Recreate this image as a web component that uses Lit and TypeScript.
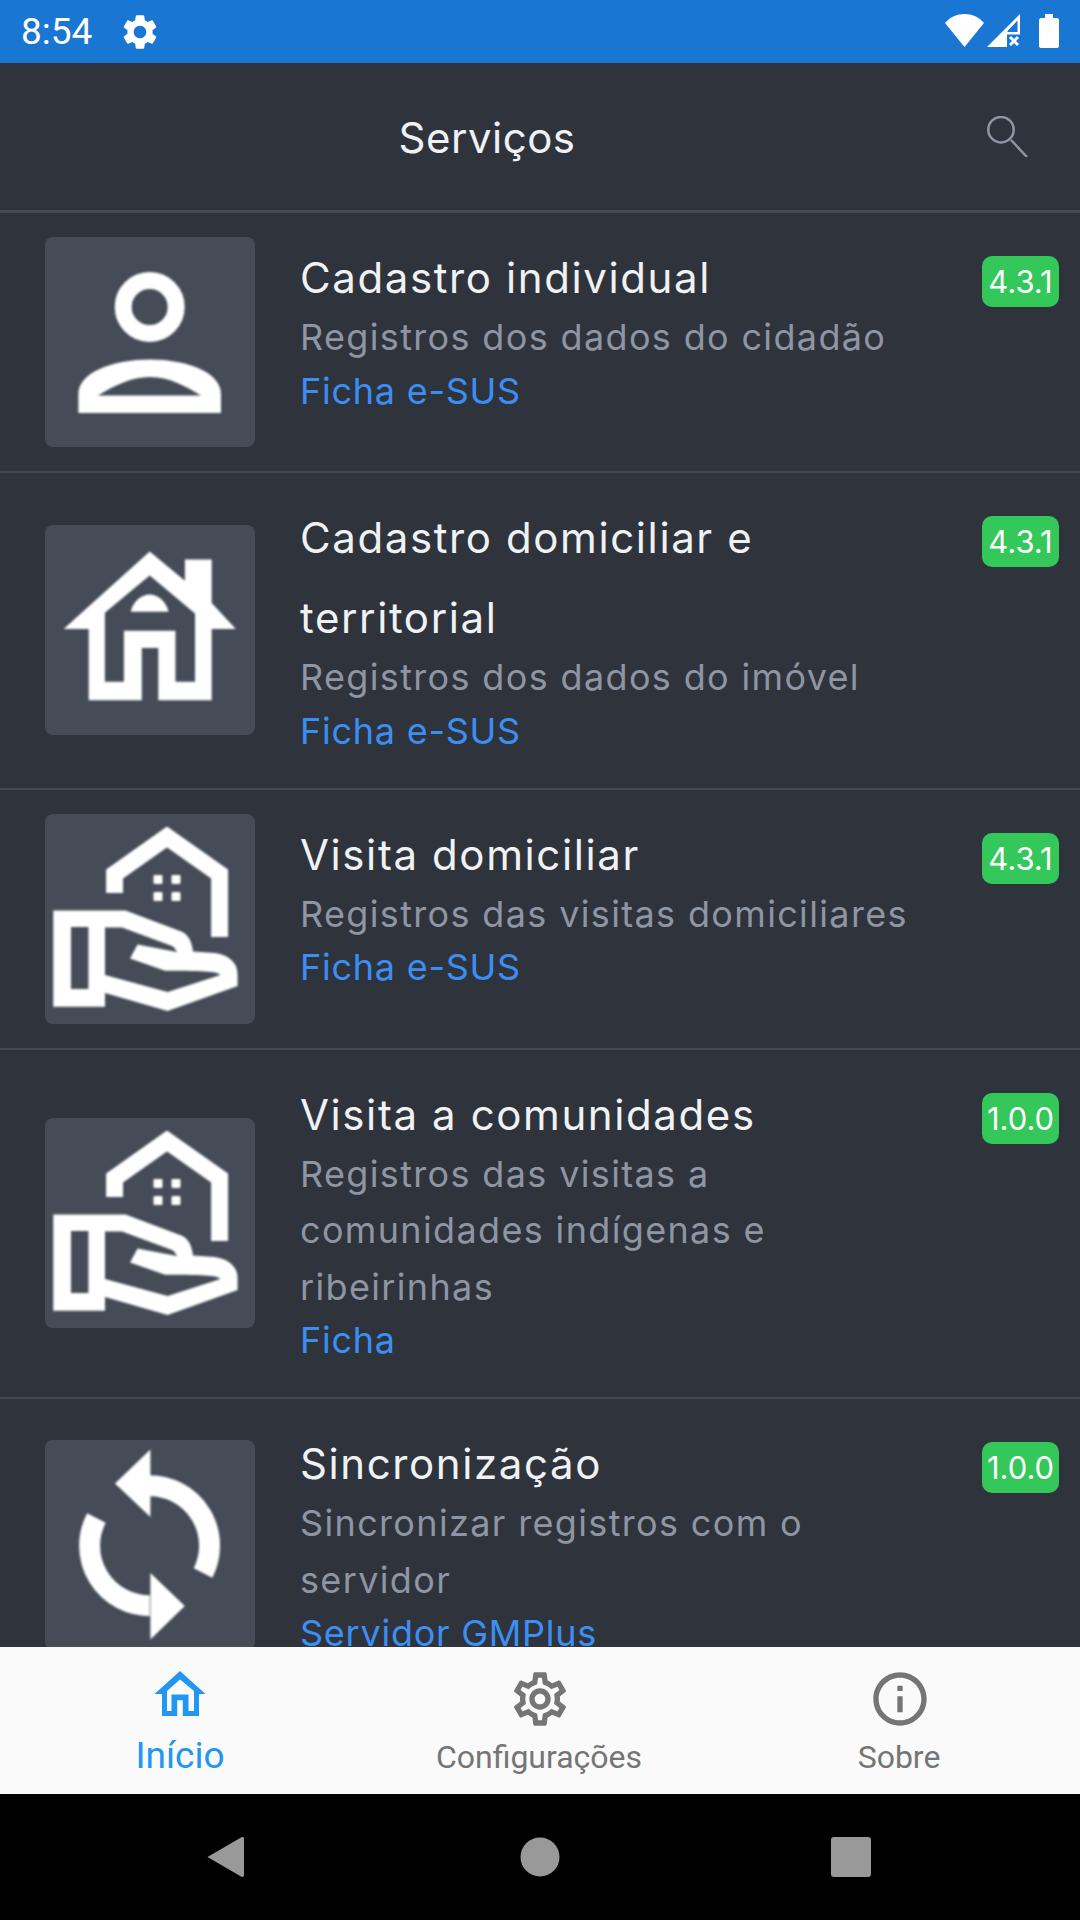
import { LitElement, html, css, svg } from "lit";
import { customElement } from "lit/decorators.js";

const GEAR_FILL = "M19.14 12.94c.04-.3.06-.61.06-.94 0-.32-.02-.64-.07-.94l2.03-1.58c.18-.14.23-.41.12-.61l-1.92-3.32c-.12-.22-.37-.29-.59-.22l-2.39.96c-.5-.38-1.03-.7-1.62-.94l-.36-2.54c-.04-.24-.24-.41-.48-.41h-3.84c-.24 0-.43.17-.47.41l-.36 2.54c-.59.24-1.13.57-1.62.94l-2.39-.96c-.22-.08-.47 0-.59.22L2.74 8.87c-.12.21-.08.47.12.61l2.03 1.58c-.05.3-.09.63-.09.94s.02.64.07.94l-2.03 1.58c-.18.14-.23.41-.12.61l1.92 3.32c.12.22.37.29.59.22l2.39-.96c.5.38 1.03.7 1.62.94l.36 2.54c.05.24.24.41.48.41h3.84c.24 0 .44-.17.47-.41l.36-2.54c.59-.24 1.13-.56 1.62-.94l2.39.96c.22.08.47 0 .59-.22l1.92-3.32c.12-.22.07-.47-.12-.61l-2.01-1.58zM12 15.6c-1.98 0-3.6-1.62-3.6-3.6s1.62-3.6 3.6-3.6 3.6 1.62 3.6 3.6-1.62 3.6-3.6 3.6z";
const GEAR_OUT = "M19.43 12.98c.04-.32.07-.64.07-.98 0-.34-.03-.66-.07-.98l2.11-1.65c.19-.15.24-.42.12-.64l-2-3.46c-.09-.16-.26-.25-.44-.25-.06 0-.12.01-.17.03l-2.49 1c-.52-.4-1.08-.73-1.69-.98l-.38-2.65C14.46 2.18 14.25 2 14 2h-4c-.25 0-.46.18-.49.42l-.38 2.65c-.61.25-1.17.59-1.69.98l-2.49-1c-.06-.02-.12-.03-.18-.03-.17 0-.34.09-.43.25l-2 3.46c-.13.22-.07.49.12.64l2.11 1.65c-.04.32-.07.65-.07.98 0 .33.03.66.07.98l-2.11 1.65c-.19.15-.24.42-.12.64l2 3.46c.09.16.26.25.44.25.06 0 .12-.01.17-.03l2.49-1c.52.4 1.08.73 1.69.98l.38 2.65c.03.24.24.42.49.42h4c.25 0 .46-.18.49-.42l.38-2.65c.61-.25 1.17-.59 1.69-.98l2.49 1c.06.02.12.03.18.03.17 0 .34-.09.43-.25l2-3.46c.12-.22.07-.49-.12-.64l-2.11-1.65zm-1.98-1.71c.04.31.05.52.05.73 0 .21-.02.43-.05.73l-.14 1.13.89.7 1.08.84-.7 1.21-1.27-.51-1.04-.42-.9.68c-.43.32-.84.56-1.25.73l-1.06.43-.16 1.13-.2 1.35h-1.4l-.19-1.35-.16-1.13-1.06-.43c-.43-.18-.83-.41-1.23-.71l-.91-.7-1.06.43-1.27.51-.7-1.21 1.08-.84.89-.7-.14-1.13c-.03-.31-.05-.54-.05-.74s.02-.43.05-.73l.14-1.13-.89-.7-1.08-.84.7-1.21 1.27.51 1.04.42.9-.68c.43-.32.84-.56 1.25-.73l1.06-.43.16-1.13.2-1.35h1.39l.19 1.35.16 1.13 1.06.43c.43.18.83.41 1.23.71l.91.7 1.06-.43 1.27-.51.7 1.21-1.07.85-.89.7.14 1.13zM12 8c-2.21 0-4 1.79-4 4s1.79 4 4 4 4-1.79 4-4-1.79-4-4-4zm0 6c-1.1 0-2-.9-2-2s.9-2 2-2 2 .9 2 2-.9 2-2 2z";
const INFO = "M11 7h2v2h-2zm0 4h2v6h-2zm1-9C6.48 2 2 6.48 2 12s4.48 10 10 10 10-4.48 10-10S17.52 2 12 2zm0 18c-4.41 0-8-3.59-8-8s3.59-8 8-8 8 3.59 8 8-3.59 8-8 8z";

const personIcon = svg`
  <circle cx="104.7" cy="70" r="26.5" fill="none" stroke="#fff" stroke-width="17"/>
  <path fill="#fff" fill-rule="evenodd" d="M33.4 176V157C33.4 136 66 122.5 105 122.5S176 136 176 157V176ZM53 158.5H156C140 149 124 140 105 140S69 149 53 158.5Z"/>`;

const houseIcon = svg`
  <path fill="#fff" fill-rule="evenodd" d="M104.7 26.5L139.9 55.8V34.4H166.7V78L190.8 104H166.7V175.3H113.3V123H96.8V175.3H43.7V104H18.6ZM104.7 50.6L59.9 87.8V156.7H78.9V105.7H130.5V156.7H150V88.5Z"/>
  <path fill="#fff" d="M85.7 86.8C88 76 97 69.6 104.7 69.6S121 76 123.6 86.8Z"/>`;

const handIcon = svg`
  <path fill="none" stroke="#fff" stroke-width="17" d="M69.6 79V60L122 23L174.6 60V123"/>
  <g fill="#fff">
    <rect x="108.5" y="61" width="9" height="9" rx="1"/><rect x="126.5" y="61" width="9" height="9" rx="1"/>
    <rect x="108.5" y="78" width="9" height="9" rx="1"/><rect x="126.5" y="78" width="9" height="9" rx="1"/>
    <path fill-rule="evenodd" d="M8.3 96.4H80.6L137 117.8C144 121 147 129 148 137.5L170 139C184 141 192.6 149 192.6 160V172L122.6 197L60 179V192.8H8.3ZM26 113V175H43.4V113ZM60 113.6V161L122.6 178L175.3 161C172 157.5 165 157 120 156.7L85 144.6L92.6 130.5L132 138C130 134 128 132.6 127 132L77 113.6Z"/>
  </g>`;

const syncIcon = svg`
  <path fill="none" stroke="#fff" stroke-width="21" d="M104.7 45.7A60 60 0 0 1 158 133M104.7 165.7A60 60 0 0 1 51.4 78"/>
  <path fill="#fff" d="M70 43.4L105.4 9.6V77ZM139.8 166L105.4 133V199.4Z"/>`;

interface Row {
  icon: unknown;
  title: unknown;
  sub: unknown;
  link: string;
  version: string;
}

const rows: Row[] = [
  { icon: personIcon, title: "Cadastro individual", sub: "Registros dos dados do cidadão", link: "Ficha e-SUS", version: "4.3.1" },
  { icon: houseIcon, title: html`Cadastro domiciliar e<br />territorial`, sub: "Registros dos dados do imóvel", link: "Ficha e-SUS", version: "4.3.1" },
  { icon: handIcon, title: "Visita domiciliar", sub: "Registros das visitas domiciliares", link: "Ficha e-SUS", version: "4.3.1" },
  { icon: handIcon, title: "Visita a comunidades", sub: html`Registros das visitas a<br />comunidades indígenas e<br />ribeirinhas`, link: "Ficha", version: "1.0.0" },
  { icon: syncIcon, title: "Sincronização", sub: html`Sincronizar registros com o<br />servidor`, link: "Servidor GMPlus", version: "1.0.0" },
];

@customElement("app-root")
export class AppRoot extends LitElement {
  static styles = css`
    :host { display: block; width: 1080px; height: 1920px; overflow: hidden; background: #2f333c; font-family: "Inter", "Liberation Sans", sans-serif; }
    .page { display: flex; flex-direction: column; height: 1920px; }
    .status { height: 63px; flex: none; background: #1976d2; display: flex; align-items: center; padding: 0 20px 0 21px; color: #fff; box-sizing: border-box; }
    .time { font: 400 37px "Roboto", sans-serif; width: 98px; }
    .status-gear { width: 42px; height: 42px; }
    .spacer { flex: 1; }
    .status-right { display: block; width: 115px; height: 37px; }
    .header { height: 150px; flex: none; box-sizing: border-box; border-bottom: 3px solid #434a56; display: flex; align-items: center; padding-right: 52px; }
    .header h1 { flex: 1; margin: 2px 13px 0 0; text-align: center; font-size: 42px; letter-spacing: 0.5px; font-weight: 400; color: #f0f1f3; }
    .search { width: 41px; height: 41px; }
    .list { flex: 1; min-height: 0; overflow: hidden; }
    .row { display: flex; align-items: center; padding: 24px 21px 24px 45px; border-bottom: 2px solid #434a56; }
    .row:last-child { border-bottom: 0; }
    .box { flex: none; width: 210px; height: 210px; border-radius: 8px; background: #454c58; }
    .box svg { display: block; width: 210px; height: 210px; filter: blur(0.9px); }
    .text { flex: 1; min-width: 0; align-self: flex-start; margin: 1px 0 0 45px; padding-bottom: 7.5px; }
    .title { font-size: 42px; letter-spacing: 1.6px; line-height: 80px; font-weight: 400; color: #f0f1f3; margin-bottom: -9px; }
    .sub { font-size: 36px; letter-spacing: 1.35px; line-height: 56.5px; color: #8e95a3; }
    .link { font-size: 36px; letter-spacing: 0.75px; line-height: 50.5px; color: #3b8ff3; }
    .badge { flex: none; align-self: flex-start; margin-top: 19px; width: 77px; height: 51px; border-radius: 10px; background: #34c759; color: #fff; font-size: 31px; display: flex; align-items: center; justify-content: center; }
    .tabs { height: 147px; flex: none; background: #fafafa; display: grid; grid-template-columns: repeat(3, 1fr); }
    .tab { display: flex; flex-direction: column; align-items: center; padding-top: 20px; color: #757575; font: 400 32px/42px "Roboto", sans-serif; }
    .tab svg { display: block; width: 64px; height: 64px; fill: currentColor; }
    .tab span { margin: 5px 2px 0 0; }
    .tab.on { color: #2196f3; font-size: 37px; }
    .tab.on span { margin: 4px 0 0; }
    .nav { height: 126px; flex: none; background: #000; display: flex; align-items: center; justify-content: center; }
    .nav svg { display: block; width: 1080px; height: 126px; }
  `;

  render() {
    return html`<div class="page">
      <div class="status">
        <span class="time">8:54</span>
        <svg class="status-gear" viewBox="0 0 24 24" fill="#fff"><path d=${GEAR_FILL} /></svg>
        <span class="spacer"></span>
        <svg class="status-right" viewBox="0 0 115 37" fill="#fff">
          <path d="M0 10C5 4 12 1 19.500 1C27 1 34 4 39 10L19.500 34Z" />
          <path fill-rule="evenodd" d="M75 1V21.500H62V34H42ZM72.500 7.500L62.500 18V19H72.500Z" />
          <path d="M65 24l8 8M73 24l-8 8" stroke="#fff" stroke-width="3" fill="none" />
          <path d="M96 5H100V1H108V5H112C113 5 114 6 114 7V33C114 34 113 35 112 35H96C95 35 94 34 94 33V7C94 6 95 5 96 5Z" />
        </svg>
      </div>
      <div class="header">
        <h1>Serviços</h1>
        <svg class="search" viewBox="0 0 41 41" fill="none" stroke="#8e95a3" stroke-width="2.500"><circle cx="14" cy="13.700" r="12.700" /><path d="M24 24L40 41" /></svg>
      </div>
      <div class="list">
        ${rows.map((r) => html`<div class="row">
          <div class="box"><svg viewBox="0 0 210 210">${r.icon}</svg></div>
          <div class="text">
            <div class="title">${r.title}</div>
            <div class="sub">${r.sub}</div>
            <div class="link">${r.link}</div>
          </div>
          <div class="badge">${r.version}</div>
        </div>`)}
      </div>
      <div class="tabs">
        <div class="tab on">
          <svg viewBox="0 0 64 64"><path fill-rule="evenodd" d="M32 4L57.500 27H51V49H34.800V33.300H29.200V49H14V27H6.500ZM32 12.500L19 24V44H23.500V27.500H40.500V44H46V24Z" /></svg>
          <span>Início</span>
        </div>
        <div class="tab"><svg viewBox="0 0 24 24"><path d=${GEAR_OUT} /></svg><span>Configurações</span></div>
        <div class="tab"><svg viewBox="0 0 24 24"><path d=${INFO} /></svg><span>Sobre</span></div>
      </div>
      <div class="nav">
        <svg viewBox="0 0 1080 126" fill="#999">
          <path d="M207.500 63L241 43.500C243 42.500 244 43 244 45V81C244 83 243 83.500 241 82.500Z" />
          <circle cx="540" cy="63" r="19.500" />
          <rect x="831" y="43" width="40" height="40" rx="3" />
        </svg>
      </div>
    </div>`;
  }
}
